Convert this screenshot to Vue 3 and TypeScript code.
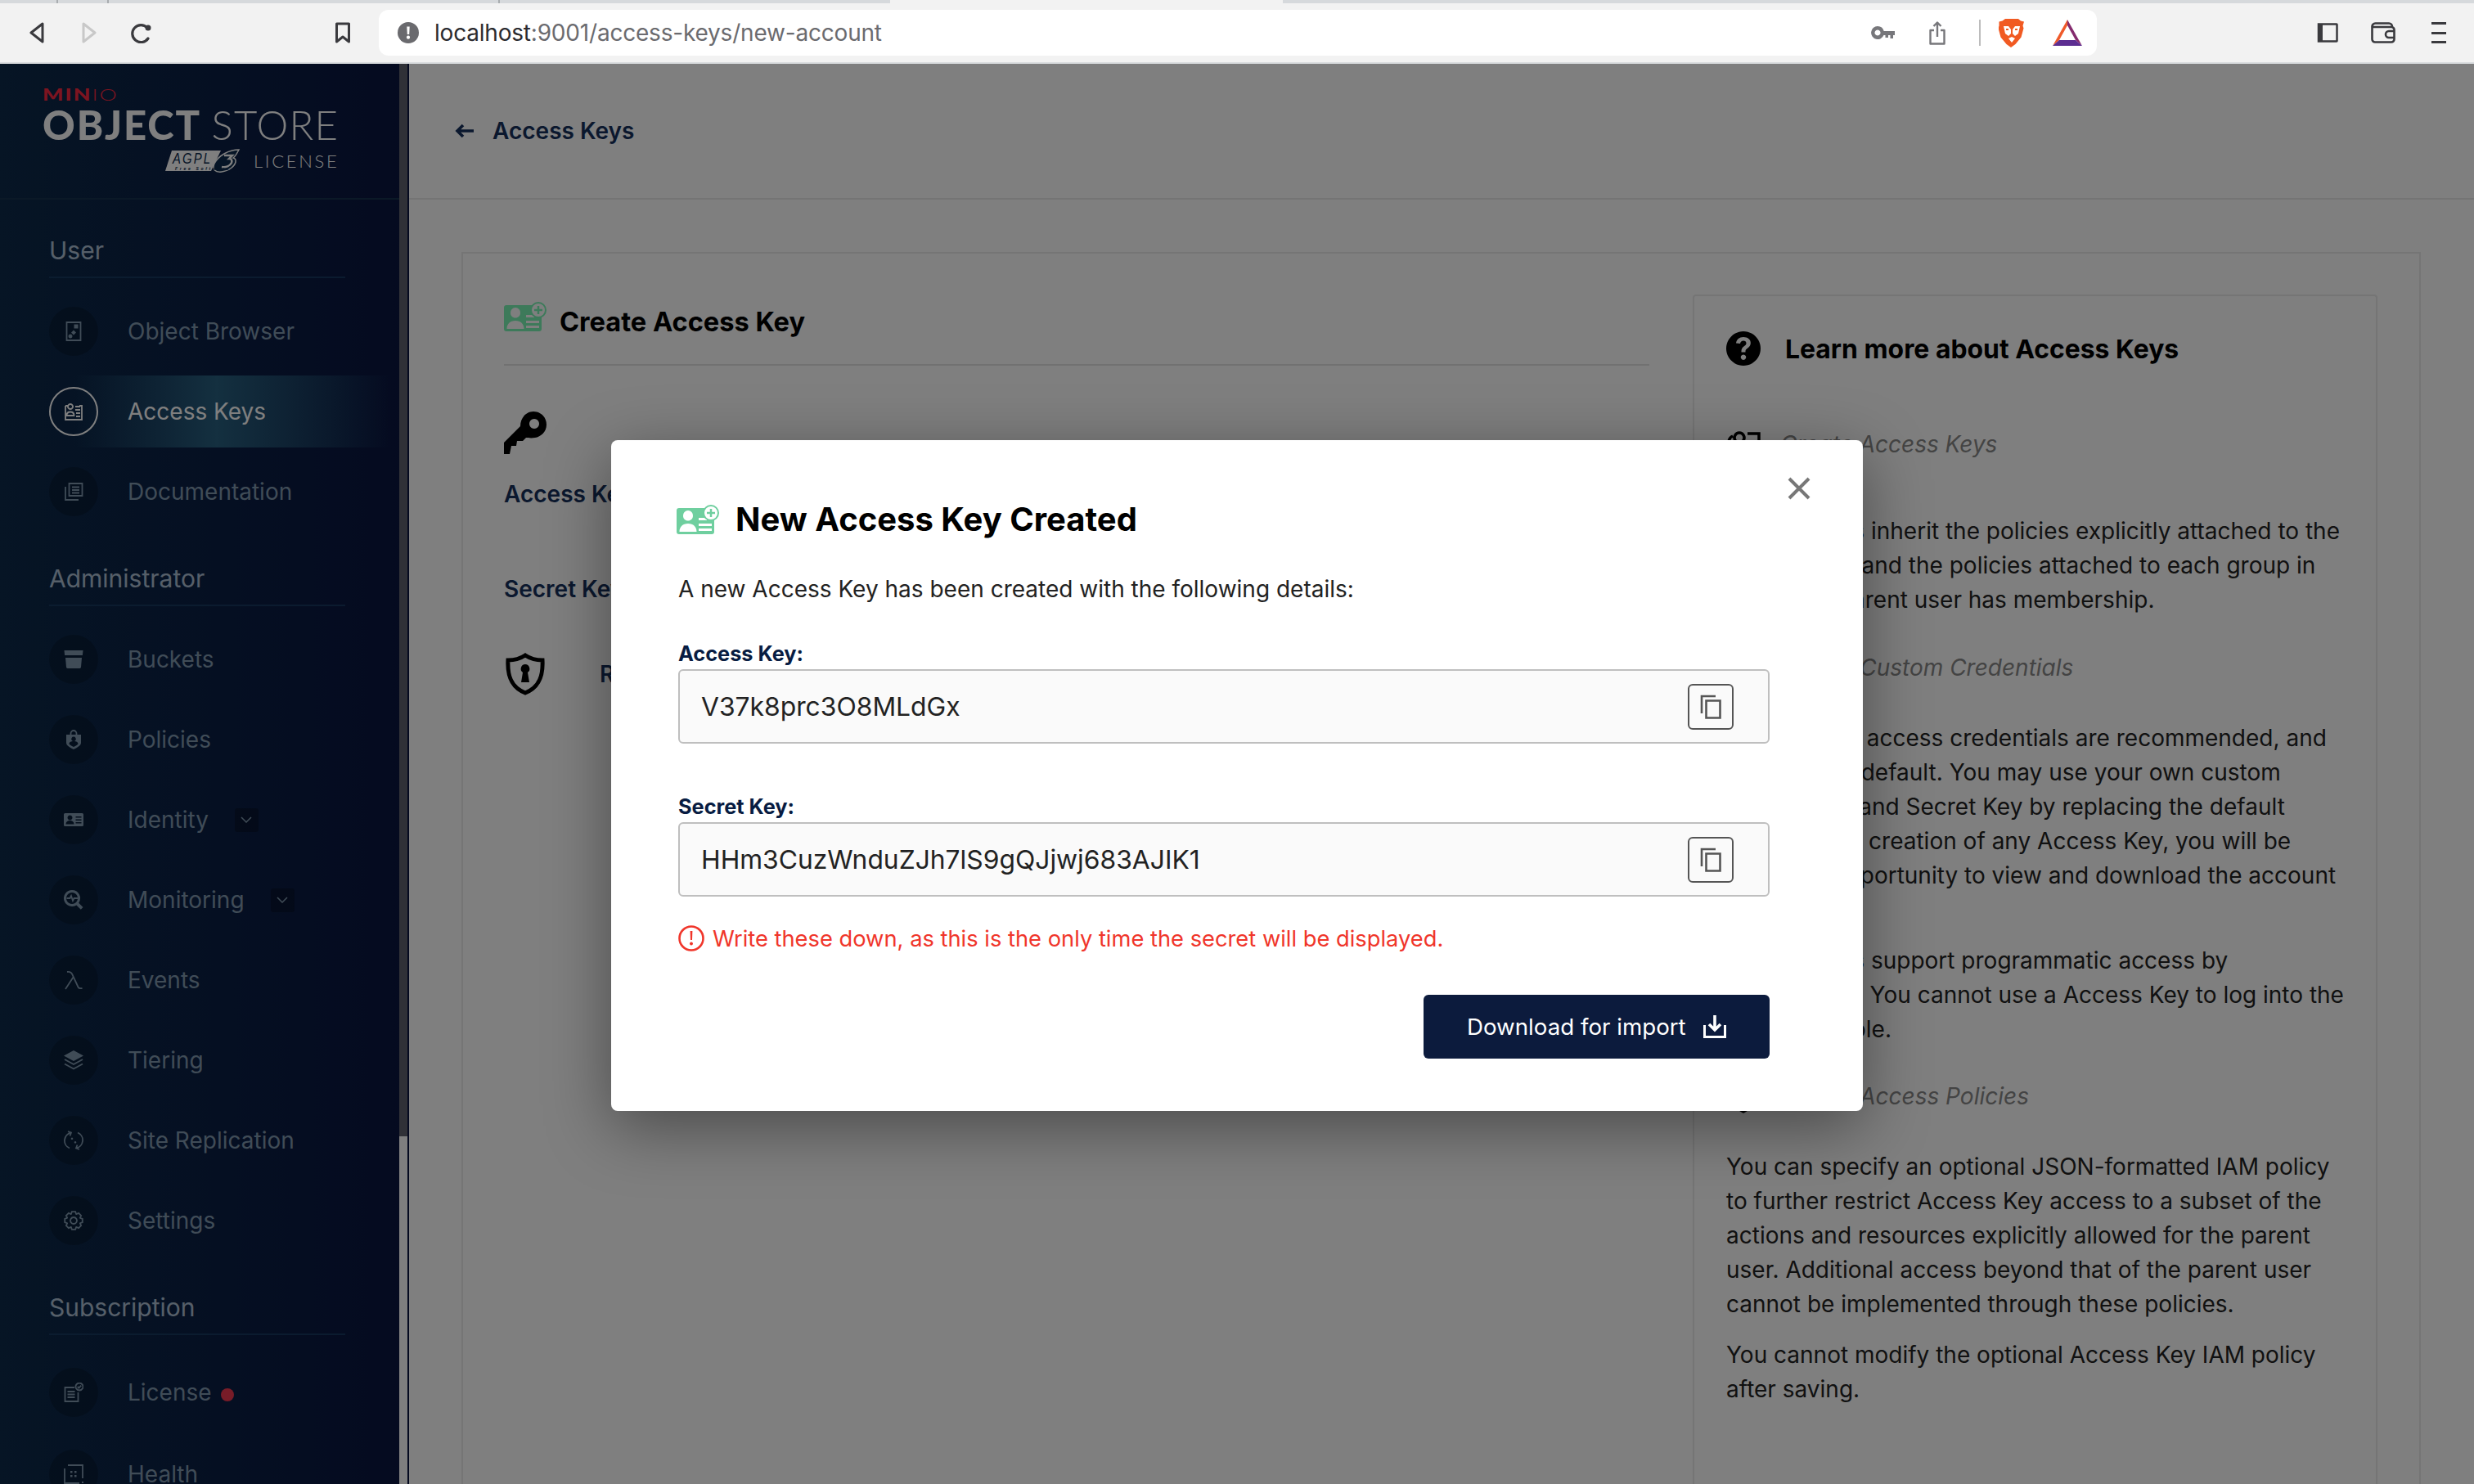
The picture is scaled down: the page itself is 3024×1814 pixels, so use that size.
<script setup lang="ts">
interface NavItem {
  label: string
  fill?: string
  stroke?: string
  active?: boolean
  chevron?: boolean
  dot?: boolean
}
interface NavSection {
  title: string
  items: NavItem[]
}

function gearPath(): string {
  const parts: string[] = []
  const n = 8
  for (let i = 0; i < n; i++) {
    const a = (i / n) * Math.PI * 2
    const s = Math.PI / n
    const pts: [number, number][] = [
      [8.6, a - s * 0.95],
      [11, a - s * 0.5],
      [11, a + s * 0.5],
      [8.6, a + s * 0.95],
    ]
    pts.forEach(([r, t], j) => {
      const x = (12 + r * Math.cos(t)).toFixed(2)
      const y = (12 + r * Math.sin(t)).toFixed(2)
      parts.push(`${i === 0 && j === 0 ? 'M' : 'L'}${x} ${y}`)
    })
  }
  return parts.join(' ') + ' Z M12 8a4 4 0 1 0 .01 0z'
}

const sections: NavSection[] = [
  {
    title: 'User',
    items: [
      {
        label: 'Object Browser',
        stroke: 'M3.5 1h17v22h-17z',
        fill: 'M12.5 3.5h5v5h-5z M12 10.5l3 3-3 3-3-3z M8 15.5a2.5 2.5 0 1 0 .01 0z',
      },
      {
        label: 'Access Keys',
        active: true,
        stroke: 'M2 5h3 M19 5h3v17H2V5 M8 3a3 3 0 1 1-.01 0z M3.5 17c0-3 2-4.5 4.5-4.5s4.5 1.5 4.5 4.5z M14 6h6 M14 10h6 M15 14h5 M15 18h5',
      },
      {
        label: 'Documentation',
        stroke: 'M6.5 2h16v15h-16z M2 6v16h16 M10 6.5h9 M10 10h9 M10 13.5h9',
      },
    ],
  },
  {
    title: 'Administrator',
    items: [
      {
        label: 'Buckets',
        fill: 'M0.5 1h23l-.6 6H1.1z M2 10h20l-1 11.5a2 2 0 0 1-2 1.5H5a2 2 0 0 1-2-1.5z',
      },
      {
        label: 'Policies',
        stroke: 'M8.5 6V4.5a3.5 3.5 0 0 1 7 0V6',
        fill: 'M3 6h18v10c0 3.5-5 6-9 8-4-2-9-4.5-9-8z M12 8.5a2.8 2.8 0 1 0 .01 0z M6.5 17.5c0-2.5 2.5-3.5 5.5-3.5s5.5 1 5.5 3.5c-1.5 1.5-3.5 2.5-5.5 3.5-2-1-4-2-5.5-3.5z',
      },
      {
        label: 'Identity',
        chevron: true,
        fill: 'M1.5 4h21A1.5 1.5 0 0 1 24 5.5v13a1.5 1.5 0 0 1-1.5 1.5h-21A1.5 1.5 0 0 1 0 18.5v-13A1.5 1.5 0 0 1 1.5 4z M7.5 6.5a3 3 0 1 0 .01 0z M2.5 17.5c0-3 2-4.5 5-4.5s5 1.5 5 4.5z M14.5 8h7v1.6h-7z M14.5 11.5h7v1.6h-7z M14.5 15h7v1.6h-7z',
      },
      {
        label: 'Monitoring',
        chevron: true,
        stroke: 'M3.5 10h4l1.5-3 2 6 1.5-3h6',
        fill: 'M10 0a10 10 0 0 1 8.2 15.7l5.3 5.4-2.7 2.7-5.4-5.4A10 10 0 1 1 10 0z M10 3a7 7 0 1 0 .01 0z',
      },
      {
        label: 'Events',
        stroke: 'M4 2c4-.5 5.5 1 6.5 3.5l7 15c.6 1.3 2.5 2 5 1.5 M11.5 8.5 2 23',
      },
      {
        label: 'Tiering',
        fill: 'M12 0l12 6.5-12 6.5L0 6.5z',
        stroke: 'M1 11l11 6 11-6 M1 16.5l11 6 11-6',
      },
      {
        label: 'Site Replication',
        stroke: 'M9 2.5a10 10 0 0 0-2 19 M15 21.5a10 10 0 0 0 2-19 M5 1l4 1.5-1.5 4 M19 23l-4-1.5 1.5-4',
        fill: 'M10 8.5a1.3 1.3 0 1 0 .01 0z M14 13a1.3 1.3 0 1 0 .01 0z',
      },
      {
        label: 'Settings',
        stroke: gearPath(),
      },
    ],
  },
  {
    title: 'Subscription',
    items: [
      {
        label: 'License',
        dot: true,
        stroke: 'M13 6H1.5v17h16V12 M4.5 11h9 M4.5 14.5h9 M4.5 18h9 M19 .5a4.5 4.5 0 1 0 .01 0z M16.8 5l1.6 1.6 2.8-3',
      },
      {
        label: 'Health',
        stroke: 'M1 5V23h18 M5 1h18v16',
        fill: 'M8 8h2.5v2.5H8z M13 8h2.5v2.5H13z M8 13h2.5v2.5H8z M13 13h2.5v2.5H13z M22 21h2v2h-2z',
      },
    ],
  },
]

const fields = [
  { label: 'Access Key:', value: 'V37k8prc3O8MLdGx' },
  { label: 'Secret Key:', value: 'HHm3CuzWnduZJh7lS9gQJjwj683AJIK1' },
]
</script>

<template>
  <div class="window">
    <svg class="defs" width="0" height="0" aria-hidden="true">
      <symbol id="card-plus" viewBox="0 0 52 36">
        <path
          fill="currentColor"
          fill-rule="evenodd"
          d="M3 4h40a3 3 0 0 1 3 3v26a3 3 0 0 1-3 3H3a3 3 0 0 1-3-3V7a3 3 0 0 1 3-3z M14 7a6 6 0 0 0-6 6.5c0 3.5 2.5 6 6 6s6-2.5 6-6A6 6 0 0 0 14 7z M3.5 33h21c0-6-4-10-10.5-10S3.5 27 3.5 33z M27 16v3h10v-3z M27 23v3h16v-3z M27 29v3h16v-3z"
        />
        <circle cx="42" cy="10" r="9" fill="#fff" stroke="currentColor" stroke-width="2" />
        <path d="M42 5v10M37 10h10" stroke="currentColor" stroke-width="2.5" fill="none" />
      </symbol>
    </svg>

    <header class="chrome">
      <div class="tabstrip">
        <i class="tab-sep s1"></i><i class="tab-sep s2"></i><i class="tab-sep s3"></i>
        <i class="tab-open"></i>
      </div>
      <div class="toolbar">
        <svg class="tb back" width="20" height="26" viewBox="0 0 20 26">
          <path d="M17 2 3 13l14 11z" fill="none" stroke="#3a3a3e" stroke-width="3" stroke-linejoin="round" />
        </svg>
        <svg class="tb fwd" width="20" height="26" viewBox="0 0 20 26">
          <path d="M3 2l14 11L3 24z" fill="none" stroke="#c8c8c8" stroke-width="3" stroke-linejoin="round" />
        </svg>
        <svg class="tb reload" width="30" height="26" viewBox="0 0 30 26">
          <path d="M24 20a10.5 10.5 0 1 1-1-13" fill="none" stroke="#3a3a3e" stroke-width="3.2" stroke-linecap="round" />
          <circle cx="24" cy="7" r="3.5" fill="#3a3a3e" />
        </svg>
        <svg class="tb bookmark" width="20" height="26" viewBox="0 0 20 26">
          <path d="M2.5 2h15v22L10 18l-7.5 6z" fill="none" stroke="#3a3a3e" stroke-width="3" stroke-linejoin="round" />
        </svg>
        <div class="urlbar">
          <svg class="info" width="26" height="26" viewBox="0 0 26 26">
            <circle cx="13" cy="13" r="13" fill="#6a6a6e" />
            <path d="M11.3 5.5h3.4l-.5 9.5h-2.4z M13 16.5a2.1 2.1 0 1 1-.01 0z" fill="#fff" />
          </svg>
          <span class="url"><b>localhost</b>:9001/access-keys/new-account</span>
          <svg class="u-key" width="30" height="18" viewBox="0 0 30 18">
            <path
              fill-rule="evenodd"
              d="M8 1a8 8 0 0 1 7.7 6H29v5h-2v4h-3.5v-4h-2.5v3h-3.5v-3h-2A8 8 0 1 1 8 1z M8 5.5a3.5 3.5 0 1 0 .01 0z"
              fill="#77777b"
            />
          </svg>
          <svg class="u-share" width="22" height="29" viewBox="0 0 22 29">
            <path d="M7 11H2.5v16.5h17V11H15 M11 19V2M6.5 6 11 1.5 15.5 6" fill="none" stroke="#77777b" stroke-width="2.4" stroke-linejoin="round" />
          </svg>
          <i class="u-sep"></i>
          <svg class="u-brave" width="32" height="36" viewBox="0 0 32 36">
            <path d="M8 1h16l3 2.5 4 1-1.5 5 1 3-3 11-7 8.5-5.5 4-5.5-4-7-8.5-3-11 1-3L.5 4.5l4-1z" fill="#f15a22" />
            <path d="M6 10h6l3 4v5l-3 3-4-3zM26 10h-6l-3 4v5l3 3 4-3zM12 25l4-2 4 2-4 5z" fill="#fff" />
            <path d="M9 13h3v2H9zM20 13h3v2h-3zM15 8h2v9h-2z" fill="#f15a22" />
          </svg>
          <svg class="u-bat" width="36" height="32" viewBox="0 0 36 32">
            <path d="M18 0 0 32l8-7L18 7z" fill="#ef5a2a" />
            <path d="M18 0v7l10 18 8 7z" fill="#842b6e" />
            <path d="M0 32h36l-8-7H8z" fill="#5c2d91" />
            <path d="M18 10l8 15H10z" fill="#fff" />
          </svg>
        </div>
        <svg class="tb panel-ic" width="26" height="24" viewBox="0 0 26 24">
          <path d="M2 1.5h22a.5.5 0 0 1 .5.5v20a.5.5 0 0 1-.5.5H2z" fill="none" stroke="#3a3a3e" stroke-width="2.5" />
          <path d="M1 1h6v22H1z" fill="#3a3a3e" />
        </svg>
        <svg class="tb wallet" width="31" height="26" viewBox="0 0 31 26">
          <path d="M1.5 6a4 4 0 0 1 4-4.5H22a4 4 0 0 1 4 4M1.5 6v15a3.5 3.5 0 0 0 3.5 3.5h20a3.5 3.5 0 0 0 3.5-3.5V9.5A3.5 3.5 0 0 0 25 6H1.5z" fill="none" stroke="#3a3a3e" stroke-width="2.6" />
          <path d="M29 11h-7a4 4 0 0 0 0 8h7" fill="none" stroke="#3a3a3e" stroke-width="2.6" />
        </svg>
        <div class="tb menu"><i></i><i></i><i></i></div>
      </div>
    </header>

    <div class="app">
      <aside class="sidebar">
        <div class="side-col">
          <div class="logo">
            <div class="logo-minio"><b>MIN</b><span>IO</span></div>
            <div class="logo-main"><b>OBJECT</b> <span>STORE</span></div>
            <div class="logo-lic">
              <svg class="agpl" width="92" height="31" viewBox="0 0 92 31">
                <path d="M8 3h60L56 28H0z" fill="#fff" />
                <path d="M90 2C78 2 65 9 60 19c-3 7 1 11 9 10 9-1 16-7 17-12 .5-3-1-4.5-3-5 3-2 5-6 7-10z" fill="#0c2a4c" stroke="#fff" stroke-width="1.5" />
                <path d="M72 9h10l-4 4c3 0 4 2 3 5-2 4-7 6-12 5" fill="none" stroke="#fff" stroke-width="2.5" />
                <text x="9" y="19" textLength="48" lengthAdjust="spacingAndGlyphs" font-family="Liberation Sans, sans-serif" font-style="italic" font-size="19" fill="#0c2a4c">AGPL</text>
                <text x="12" y="26.5" font-family="Liberation Sans, sans-serif" font-style="italic" font-weight="700" font-size="5" fill="#0c2a4c">Free Software</text>
              </svg>
              <span>LICENSE</span>
            </div>
          </div>

          <section v-for="sec in sections" :key="sec.title" class="nav-sec">
            <div class="sec-title">{{ sec.title }}</div>
            <div
              v-for="item in sec.items"
              :key="item.label"
              class="nav-row"
              :class="{ active: item.active }"
            >
              <span class="nav-circle">
                <svg width="24" height="24" viewBox="0 0 24 24" class="nav-icon">
                  <path v-if="item.fill" :d="item.fill" fill="currentColor" fill-rule="evenodd" />
                  <path v-if="item.stroke" :d="item.stroke" fill="none" stroke="currentColor" stroke-width="1.8" />
                </svg>
              </span>
              <span class="nav-label">{{ item.label }}</span>
              <span v-if="item.chevron" class="chev">
                <svg width="14" height="8" viewBox="0 0 14 8">
                  <path d="M1 1l6 6 6-6" fill="none" stroke="currentColor" stroke-width="1.5" />
                </svg>
              </span>
              <span v-if="item.dot" class="dot"></span>
            </div>
          </section>
        </div>
        <div class="scrollbar"><div class="thumb"></div></div>
        <div class="side-edge"></div>
      </aside>

      <main class="main">
        <div class="main-head">
          <svg width="24" height="18" viewBox="0 0 24 18">
            <path d="M23 9H3M10 2 3 9l7 7" fill="none" stroke="currentColor" stroke-width="3.6" />
          </svg>
          <span>Access Keys</span>
        </div>

        <div class="card">
          <div class="form-col">
            <div class="form-title">
              <svg class="green-dim" width="52" height="36"><use href="#card-plus" /></svg>
              <h2>Create Access Key</h2>
            </div>
            <svg class="key-ic" width="52" height="52" viewBox="0 0 52 52">
              <path
                fill-rule="evenodd"
                d="M0 52V38L20 18C20 8 27 0 36 0c9 0 16 7 16 16 0 9-7 15-14 16-5 1-9 0-11 0l-4 4h-7l-1 6H9L7 52z M37 9a6 6 0 1 0 .01 0z"
                fill="#000"
              />
            </svg>
            <div class="f-label first">Access Key</div>
            <div class="f-label second">Secret Key</div>
            <div class="restrict">
              <svg width="52" height="52" viewBox="0 0 52 52">
                <path d="M26 3c6 4 13 6 21 6 1 18-3 33-21 40C8 42 4 27 5 9c8 0 15-2 21-6z" fill="none" stroke="#000" stroke-width="5" />
                <path d="M26 14a5.5 5.5 0 0 1 3 10l2 12h-10l2-12a5.5 5.5 0 0 1 3-10z" fill="#000" />
              </svg>
              <span>Restrict beyond user policy</span>
            </div>
          </div>

          <div class="help">
            <div class="help-head">
              <svg width="42" height="42" viewBox="0 0 42 42">
                <path
                  fill-rule="evenodd"
                  d="M21 0a21 21 0 1 1-.01 0z M21 7c-5 0-8.5 3-9 7.5l5 .6c.4-2.3 1.8-3.6 4-3.6 2.1 0 3.5 1.2 3.5 3 0 1.5-.8 2.4-2.7 3.8-2.4 1.7-3.3 3.4-3.3 6v1.2h5v-.9c0-1.6.5-2.5 2.4-3.9 2.8-2 3.9-3.8 3.9-6.5C30 10 26.2 7 21 7z M21 28.5a3.2 3.2 0 1 0 .01 0z"
                  fill="#000"
                />
              </svg>
              <h3>Learn more about Access Keys</h3>
            </div>

            <div class="h-sub first-sub">
              <svg width="42" height="32" viewBox="0 0 42 32">
                <path d="M8 6C3 8 2 14 4 18 M16 2a6 6 0 1 1-.01 0z M5 28c0-6 5-10 11-10s11 4 11 10z M26 3h14v14" fill="none" stroke="#000" stroke-width="3.5" />
              </svg>
              <em>Create Access Keys</em>
            </div>
            <p class="p1">
              Access Keys inherit the policies explicitly attached to the parent user, and the policies attached to each group in which the parent user has membership.
            </p>
            <div class="h-sub second-sub">
              <svg width="42" height="32" viewBox="0 0 42 32">
                <circle cx="20" cy="16" r="12" fill="none" stroke="#000" stroke-width="3.5" />
              </svg>
              <em>Assign Custom Credentials</em>
            </div>
            <p class="p2">
              Randomized access credentials are recommended, and provided by default. You may use your own custom Access Key and Secret Key by replacing the default values. After creation of any Access Key, you will be given the opportunity to view and download the account credentials.
            </p>
            <p class="p3">
              Access Keys support programmatic access by applications. You cannot use a Access Key to log into the MinIO Console.
            </p>
            <div class="h-sub third-sub">
              <svg width="42" height="42" viewBox="0 0 42 42">
                <path d="M21 3c5 3 10 4 15 4 1 14-3 26-15 32C9 33 5 21 6 7c5 0 10-1 15-4z" fill="none" stroke="#000" stroke-width="5" />
              </svg>
              <em>Assign Access Policies</em>
            </div>
            <p class="p4">
              You can specify an optional JSON-formatted IAM policy to further restrict Access Key access to a subset of the actions and resources explicitly allowed for the parent user. Additional access beyond that of the parent user cannot be implemented through these policies.
            </p>
            <p class="p5">
              You cannot modify the optional Access Key IAM policy after saving.
            </p>
          </div>
        </div>
      </main>

      <div class="backdrop">
        <div class="modal" role="dialog">
          <button class="close" aria-label="Close">
            <svg width="28" height="28" viewBox="0 0 28 28">
              <path d="M2 2l24 24M26 2 2 26" stroke="#777" stroke-width="4" fill="none" />
            </svg>
          </button>
          <div class="modal-title">
            <svg class="green" width="52" height="36"><use href="#card-plus" /></svg>
            <h1>New Access Key Created</h1>
          </div>
          <p class="modal-sub">A new Access Key has been created with the following details:</p>

          <div v-for="f in fields" :key="f.label" class="field">
            <label>{{ f.label }}</label>
            <div class="input">
              <span>{{ f.value }}</span>
              <span class="copy">
                <svg width="26" height="30" viewBox="0 0 26 30">
                  <path d="M2 23V2h17" fill="none" stroke="#555" stroke-width="2.6" />
                  <path d="M7.5 7.5h17v21h-17z" fill="none" stroke="#555" stroke-width="2.6" />
                </svg>
              </span>
            </div>
          </div>

          <div class="warn">
            <svg width="32" height="32" viewBox="0 0 32 32">
              <circle cx="16" cy="16" r="14.5" fill="none" stroke="#f0362b" stroke-width="2.6" />
              <path d="M14.6 7h2.8l-.4 11h-2z M16 20.5a2 2 0 1 1-.01 0z" fill="#f0362b" />
            </svg>
            <span>Write these down, as this is the only time the secret will be displayed.</span>
          </div>

          <div class="actions">
            <button class="download">
              <span>Download for import</span>
              <svg width="28" height="28" viewBox="0 0 28 28">
                <path d="M14 0v17M7 11l7 7 7-7" fill="none" stroke="#fff" stroke-width="3.6" />
                <path d="M1.5 12v14.5h25V12" fill="none" stroke="#fff" stroke-width="3" />
              </svg>
            </button>
          </div>
        </div>
      </div>
    </div>
  </div>
</template>

<style>
html,
body {
  margin: 0;
  padding: 0;
  background: #fff;
  overflow: hidden;
}
</style>

<style scoped>
* {
  box-sizing: border-box;
}
.window {
  width: 3024px;
  height: 1814px;
  display: flex;
  flex-direction: column;
  overflow: hidden;
  font-family: Inter, 'Noto Sans', sans-serif;
}
.defs {
  position: absolute;
}

/* browser chrome */
.chrome {
  flex: none;
  height: 78px;
  background: #f2f2f2;
  border-bottom: 2px solid #d9dcde;
}
.tabstrip {
  height: 4px;
  background: #d6d9dc;
  position: relative;
}
.tab-sep {
  position: absolute;
  top: 0;
  width: 2px;
  height: 4px;
  background: #a9adb0;
}
.s1 { left: 69px; }
.s2 { left: 131px; }
.s3 { left: 609px; }
.tab-open {
  position: absolute;
  left: 1088px;
  width: 480px;
  top: 0;
  height: 4px;
  background: #f2f2f2;
}
.toolbar {
  height: 72px;
  display: flex;
  align-items: center;
  position: relative;
}
.tb {
  flex: none;
}
.back { margin-left: 35px; }
.fwd { margin-left: 44px; }
.reload { margin-left: 38px; }
.bookmark { margin-left: 222px; }
.urlbar {
  flex: none;
  margin-left: 34px;
  width: 2100px;
  height: 56px;
  background: #fff;
  border-radius: 12px;
  display: flex;
  align-items: center;
  padding-left: 23px;
}
.url {
  margin-left: 19px;
  font-size: 28px;
  letter-spacing: -0.2px;
  color: #6b6b6f;
  flex: 1;
  white-space: nowrap;
}
.url b {
  font-weight: 400;
  color: #2b2b2f;
}
.u-key { flex: none; }
.u-share { flex: none; margin-left: 40px; }
.u-sep {
  flex: none;
  width: 2px;
  height: 32px;
  background: #bcbcbc;
  margin-left: 40px;
}
.u-brave { flex: none; margin-left: 22px; }
.u-bat { flex: none; margin-left: 34px; margin-right: 18px; }
.panel-ic { margin-left: 269px; }
.wallet { margin-left: 40px; }
.menu {
  margin-left: 43px;
  width: 18px;
  height: 26px;
  display: flex;
  flex-direction: column;
  justify-content: space-between;
}
.menu i {
  display: block;
  height: 3px;
  background: #3a3a3e;
}

/* app */
.app {
  flex: 1;
  min-height: 0;
  display: flex;
  position: relative;
  background: #fff;
}
.sidebar {
  flex: none;
  width: 500px;
  height: 100%;
  display: flex;
  overflow: hidden;
  background: linear-gradient(90deg, #0c2a4a 0%, #0a1540 100%);
}
.side-col {
  flex: none;
  width: 488px;
}
.scrollbar {
  flex: none;
  width: 10px;
  background: #fff;
}
.thumb {
  height: 1311px;
  background: #60626f;
}
.side-edge {
  flex: none;
  width: 2px;
  background: #0a1440;
}
.logo {
  height: 166px;
  border-bottom: 2px solid #16324f;
  padding: 28px 0 0 52px;
  color: #fff;
  font-family: Lato, sans-serif;
}
.logo-minio {
  font-size: 20px;
  line-height: 18px;
  letter-spacing: 1.5px;
  color: #fa2840;
  transform: scaleX(1.34);
  transform-origin: left;
}
.logo-minio b { font-weight: 900; }
.logo-minio span { font-weight: 300; }
.logo-main {
  margin-top: 7px;
  font-size: 49px;
  line-height: 42px;
  white-space: nowrap;
}
.logo-main b { font-weight: 900; letter-spacing: 1.9px; }
.logo-main span { font-weight: 300; letter-spacing: 1.2px; }
.logo-lic {
  display: flex;
  align-items: center;
  margin-top: 8px;
  padding-left: 150px;
  height: 31px;
  font-size: 22px;
  letter-spacing: 2.7px;
  font-weight: 300;
}
.logo-lic span { margin-left: 16px; }
.nav-sec {
  padding: 0 66px 0 60px;
  margin-top: 37px;
}
.nav-sec:first-of-type {
  margin-top: 42px;
}
.sec-title {
  height: 54px;
  line-height: 40px;
  font-size: 30px;
  color: #dbeafa;
  border-bottom: 2px solid #1a3f66;
  margin-bottom: 16px;
  opacity: .78;
}
.nav-sec:last-child .sec-title {
  margin-bottom: 20px;
}
.nav-sec:last-child .nav-row {
  height: 100px;
}
.nav-row {
  height: 98px;
  display: flex;
  align-items: center;
  color: #8098ae;
  position: relative;
  font-size: 28px;
}
.nav-row.active {
  color: #fff;
}
.nav-row.active::before {
  content: '';
  position: absolute;
  left: 30px;
  right: -56px;
  top: 5px;
  bottom: 5px;
  background: linear-gradient(90deg, rgba(40, 96, 128, 0) 0%, #286080 45%, rgba(40, 96, 128, 0) 100%);
}
.nav-circle {
  flex: none;
  width: 60px;
  height: 60px;
  border-radius: 50%;
  background: rgba(0, 0, 0, .2);
  display: flex;
  align-items: center;
  justify-content: center;
  position: relative;
}
.nav-row.active .nav-circle {
  background: transparent;
  border: 2px solid #fff;
}
.nav-label {
  margin-left: 36px;
  position: relative;
}
.chev {
  margin-left: 32px;
  width: 29px;
  height: 29px;
  background: rgba(0, 0, 0, .25);
  border-radius: 3px;
  display: flex;
  align-items: center;
  justify-content: center;
}
.dot {
  width: 16px;
  height: 16px;
  margin: 6px 0 0 11px;
  border-radius: 50%;
  background: #f03850;
}

/* main */
.main {
  flex: 1;
  min-width: 0;
  display: flex;
  flex-direction: column;
}
.main-head {
  flex: none;
  height: 166px;
  border-bottom: 2px solid #e8e8e8;
  padding-left: 56px;
  display: flex;
  align-items: center;
  color: #16305c;
  font-weight: 600;
  font-size: 28px;
}
.main-head span {
  margin-left: 22px;
}
.card {
  flex: 1;
  margin: 64px 65px 0 64px;
  border: 2px solid #eaeaea;
  border-bottom: 0;
  padding: 50px 51px 0 50px;
  display: flex;
  gap: 53px;
}
.form-col {
  flex: 1;
  min-width: 0;
}
.form-title {
  height: 87px;
  border-bottom: 2px solid #e2e2e2;
  display: flex;
  align-items: flex-start;
  padding-top: 9px;
}
.form-title h2 {
  margin: 2px 0 0 16px;
  font-size: 32.6px;
  line-height: 44px;
  font-weight: 700;
  color: #000;
}
.green-dim { color: #7af4b4; }
.key-ic {
  display: block;
  margin-top: 56px;
}
.f-label {
  font-size: 28px;
  font-weight: 600;
  line-height: 40px;
  color: #16305c;
}
.f-label.first { margin-top: 29px; }
.f-label.second { margin-top: 76px; }
.restrict {
  margin-top: 58px;
  display: flex;
  align-items: center;
  font-size: 28px;
  font-weight: 600;
  color: #16305c;
}
.restrict span { margin-left: 65px; }

.help {
  flex: none;
  width: 837px;
  border: 2px solid #eaeaea;
  border-bottom: 0;
  border-radius: 4px 4px 0 0;
  padding: 43px 34px 0 39px;
}
.help-head {
  display: flex;
  align-items: center;
  height: 42px;
}
.help-head h3 {
  margin: 0 0 0 30px;
  font-size: 31.9px;
  font-weight: 700;
  color: #000;
}
.h-sub {
  height: 42px;
  display: flex;
  align-items: center;
  font-size: 28px;
  color: #888;
}
.h-sub em { margin-left: 24px; }
.first-sub { margin-top: 75px; }
.second-sub { margin-top: 41px; }
.third-sub { margin-top: 40px; }
.help p {
  margin: 0;
  font-size: 28px;
  line-height: 42px;
  color: #222;
}
.p1 { margin-top: 64px !important; }
.p2 { margin-top: 44px !important; }
.p3 { margin-top: 20px !important; }
.p4 { margin-top: 44px !important; }
.p5 { margin-top: 20px !important; }

/* modal */
.backdrop {
  position: absolute;
  inset: 0;
  background: rgba(0, 0, 0, .5);
  display: flex;
  align-items: center;
  justify-content: center;
}
.modal {
  position: relative;
  width: 1530px;
  height: 820px;
  margin-top: 4px;
  background: #fff;
  border-radius: 8px;
  padding: 73px 114px 0 82px;
  box-shadow: 0 20px 80px rgba(0, 0, 0, .42);
}
.close {
  position: absolute;
  top: 45px;
  right: 64px;
  width: 28px;
  height: 28px;
  padding: 0;
  border: 0;
  background: none;
}
.modal-title {
  display: flex;
  align-items: center;
  height: 48px;
  margin-left: -2px;
}
.green { color: #6fcf9f; flex: none; }
.modal-title h1 {
  margin: 0 0 0 20px;
  font-size: 40px;
  line-height: 48px;
  font-weight: 700;
  color: #000;
}
.modal-sub {
  margin: 40px 0 0;
  font-size: 28px;
  line-height: 42px;
  color: #222;
}
.field {
  margin-top: 59px;
}
.modal-sub + .field {
  margin-top: 40px;
}
.field label {
  display: block;
  font-size: 25.3px;
  font-weight: 700;
  line-height: 36px;
  color: #081c42;
  margin-bottom: 1px;
}
.input {
  height: 91px;
  border: 2px solid #bfbfbf;
  border-radius: 6px;
  background: #fafafa;
  display: flex;
  align-items: center;
  justify-content: space-between;
  padding: 0 42px 0 26px;
  font-size: 31.8px;
  color: #222;
}
.copy {
  width: 56px;
  height: 56px;
  border: 2px solid #555;
  border-radius: 6px;
  display: flex;
  align-items: center;
  justify-content: center;
}
.warn {
  margin-top: 30px;
  height: 42px;
  display: flex;
  align-items: center;
  font-size: 27.3px;
  color: #f0362b;
}
.warn span { margin-left: 10px; }
.actions {
  margin-top: 48px;
  display: flex;
  justify-content: flex-end;
}
.download {
  width: 423px;
  height: 78px;
  border: 0;
  border-radius: 6px;
  background: #0c1b3d;
  color: #fff;
  font-family: inherit;
  font-size: 27.7px;
  display: flex;
  align-items: center;
  padding: 0 0 0 53px;
}
.download svg { margin-left: 21px; }
</style>
